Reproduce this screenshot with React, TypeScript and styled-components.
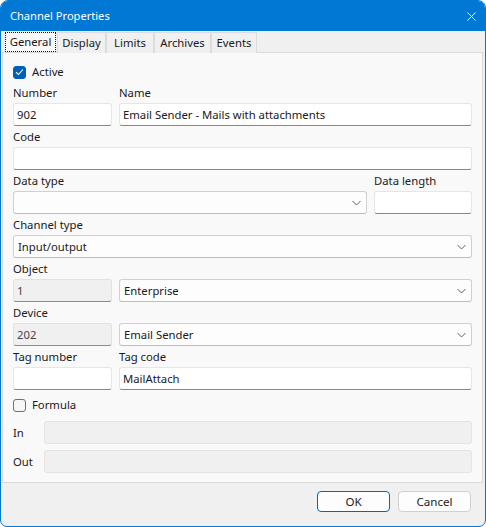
import React from 'react';
import styled, { createGlobalStyle } from 'styled-components';

const Global = createGlobalStyle`
  html, body { margin: 0; padding: 0; background: #ffffff; }
  body { font-family: "Noto Sans", "Open Sans", sans-serif; font-size: 11.3px; color: #1a1a1a; }
  * { box-sizing: border-box; }
`;

const Window = styled.div`
  width: 486px;
  height: 527px;
  border: 1px solid #0078d4;
  border-radius: 8px 8px 7px 7px;
  overflow: hidden;
  display: flex;
  flex-direction: column;
  background: #f0f0f0;
`;

const TitleBar = styled.div`
  height: 30px;
  flex: none;
  background: #0078d4;
  color: #ffffff;
  display: flex;
  align-items: center;
  justify-content: space-between;
  padding: 0 9px 0 9px;
`;

const Title = styled.span`
  font-size: 11.1px;
  line-height: 16px;
`;

const CloseBtn = styled.span`
  display: flex;
  width: 9px;
  height: 9px;
`;

const Body = styled.div`
  flex: 1;
  display: flex;
  flex-direction: column;
  padding: 2px 2px 0 1px;
`;

const TabStrip = styled.div`
  display: flex;
  align-items: flex-end;
  height: 20px;
  padding-left: 3px;
  margin-bottom: -1px;
  position: relative;
  z-index: 1;
`;

const Tab = styled.div<{ $active?: boolean; $w: number }>`
  width: ${p => p.$w}px;
  height: ${p => (p.$active ? '20px' : '21px')};
  display: flex;
  align-items: center;
  justify-content: center;
  line-height: 16px;
  background: ${p => (p.$active ? '#f9f9f9' : '#f0f0f0')};
  border: 1px ${p => (p.$active ? 'dotted #1a1a1a' : 'solid #dcdcdc')};
  border-bottom: ${p => (p.$active ? '1px dotted #1a1a1a' : 'none')};
  margin-right: ${p => (p.$active ? '1px' : '0')};
  margin-bottom: ${p => (p.$active ? '1px' : '0')};
  color: #1a1a1a;
`;

const Panel = styled.div`
  flex: 1;
  background: #f9f9f9;
  border: 1px solid #dadada;
  padding: 10px 10px 0 10px;
  display: flex;
  flex-direction: column;
`;

const CheckRow = styled.label<{ $mt?: number }>`
  display: flex;
  align-items: center;
  gap: 6px;
  height: 18px;
  margin-top: ${p => p.$mt ?? 0}px;
  line-height: 16px;
  color: #1a1a1a;
`;

const Box = styled.span<{ $checked?: boolean }>`
  width: 13px;
  height: 13px;
  border-radius: 3px;
  display: flex;
  align-items: center;
  justify-content: center;
  background: ${p => (p.$checked ? '#005fb8' : '#f6f6f6')};
  border: 1px solid ${p => (p.$checked ? '#005fb8' : '#717171')};
`;

const Row = styled.div<{ $cols: string; $mt?: number }>`
  display: grid;
  grid-template-columns: ${p => p.$cols};
  column-gap: 7px;
  margin-top: ${p => p.$mt ?? 3}px;
`;

const Field = styled.div`
  display: flex;
  flex-direction: column;
  min-width: 0;
`;

const Label = styled.span`
  line-height: 15px;
  height: 15px;
  margin-bottom: 3px;
  color: #1a1a1a;
  white-space: nowrap;
`;

const Input = styled.div<{ $disabled?: boolean }>`
  height: 23px;
  display: flex;
  align-items: center;
  padding: 0 3px;
  background: ${p => (p.$disabled ? '#f0f0f0' : '#ffffff')};
  border: 1px solid ${p => (p.$disabled ? '#e2e2e2' : '#e6e6e6')};
  border-bottom: 1px solid ${p => (p.$disabled ? '#8c8c8c' : '#878787')};
  border-radius: 3px;
  color: ${p => (p.$disabled ? '#444444' : '#1a1a1a')};
  white-space: nowrap;
  overflow: hidden;
`;

const Select = styled.div`
  height: 23px;
  display: flex;
  align-items: center;
  justify-content: space-between;
  padding: 0 5px 0 4px;
  background: #fdfdfd;
  border: 1px solid #d0d0d0;
  border-bottom-color: #bdbdbd;
  border-radius: 3px;
  color: #1a1a1a;
  white-space: nowrap;
`;

const FormulaRow = styled.div<{ $mt?: number }>`
  display: grid;
  grid-template-columns: 31px 1fr;
  align-items: center;
  margin-top: ${p => p.$mt ?? 0}px;
  color: #1a1a1a;
`;

const FormulaBox = styled.div`
  height: 23px;
  background: #f0f0f0;
  border: 1px solid #e4e4e4;
  border-radius: 3px;
`;

const Footer = styled.div`
  height: 43px;
  flex: none;
  display: flex;
  justify-content: flex-end;
  align-items: flex-start;
  gap: 8px;
  padding: 8px 12px 0 0;
`;

const Button = styled.button<{ $primary?: boolean }>`
  width: 73px;
  height: 21px;
  border-radius: 4px;
  background: #fdfdfd;
  border: 1px solid ${p => (p.$primary ? '#0067c0' : '#d0d0d0')};
  font-family: inherit;
  font-size: 11.6px;
  color: #1a1a1a;
  padding: 0;
  line-height: 16px;
`;

const Chevron = () => (
  <svg width="9" height="6" viewBox="0 0 9 6">
    <path d="M0.5 1 L4.5 5 L8.5 1" fill="none" stroke="#5f5f5f" strokeWidth="1" />
  </svg>
);

const Check = () => (
  <svg width="9" height="8" viewBox="0 0 9 8">
    <path d="M1 4.2 L3.4 6.5 L8 1.5" fill="none" stroke="#ffffff" strokeWidth="1.1" />
  </svg>
);

const tabs = [
  { name: 'General', w: 51 },
  { name: 'Display', w: 49 },
  { name: 'Limits', w: 48 },
  { name: 'Archives', w: 57 },
  { name: 'Events', w: 46 },
];

export default function App() {
  return (
    <>
      <Global />
      <Window>
        <TitleBar>
          <Title>Channel Properties</Title>
          <CloseBtn>
            <svg width="9" height="9" viewBox="0 0 9 9">
              <path d="M0.5 0.5 L8.5 8.5 M8.5 0.5 L0.5 8.5" stroke="#fff" strokeWidth="1" />
            </svg>
          </CloseBtn>
        </TitleBar>
        <Body>
          <TabStrip>
            {tabs.map((t, i) => (
              <Tab key={t.name} $active={i === 0} $w={t.w}>
                {t.name}
              </Tab>
            ))}
          </TabStrip>
          <Panel>
            <CheckRow>
              <Box $checked>
                <Check />
              </Box>
              Active
            </CheckRow>
            <Row $cols="99px 1fr" $mt={4}>
              <Field>
                <Label>Number</Label>
                <Input>902</Input>
              </Field>
              <Field>
                <Label>Name</Label>
                <Input>Email Sender - Mails with attachments</Input>
              </Field>
            </Row>
            <Row $cols="1fr">
              <Field>
                <Label>Code</Label>
                <Input />
              </Field>
            </Row>
            <Row $cols="1fr 98px">
              <Field>
                <Label>Data type</Label>
                <Select>
                  <span />
                  <Chevron />
                </Select>
              </Field>
              <Field>
                <Label>Data length</Label>
                <Input />
              </Field>
            </Row>
            <Row $cols="1fr">
              <Field>
                <Label>Channel type</Label>
                <Select>
                  <span>Input/output</span>
                  <Chevron />
                </Select>
              </Field>
            </Row>
            <Row $cols="99px 1fr">
              <Field>
                <Label>Object</Label>
                <Input $disabled>1</Input>
              </Field>
              <Field>
                <Label>&nbsp;</Label>
                <Select>
                  <span>Enterprise</span>
                  <Chevron />
                </Select>
              </Field>
            </Row>
            <Row $cols="99px 1fr">
              <Field>
                <Label>Device</Label>
                <Input $disabled>202</Input>
              </Field>
              <Field>
                <Label>&nbsp;</Label>
                <Select>
                  <span>Email Sender</span>
                  <Chevron />
                </Select>
              </Field>
            </Row>
            <Row $cols="99px 1fr">
              <Field>
                <Label>Tag number</Label>
                <Input />
              </Field>
              <Field>
                <Label>Tag code</Label>
                <Input>MailAttach</Input>
              </Field>
            </Row>
            <CheckRow $mt={6}>
              <Box />
              Formula
            </CheckRow>
            <FormulaRow $mt={7}>
              <span>In</span>
              <FormulaBox />
            </FormulaRow>
            <FormulaRow $mt={6}>
              <span>Out</span>
              <FormulaBox />
            </FormulaRow>
          </Panel>
          <Footer>
            <Button $primary>OK</Button>
            <Button>Cancel</Button>
          </Footer>
        </Body>
      </Window>
    </>
  );
}
